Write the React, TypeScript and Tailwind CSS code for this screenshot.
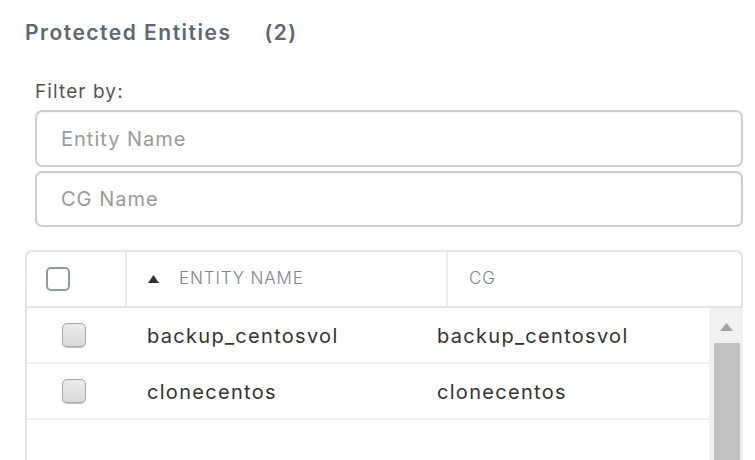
const font = { fontFamily: '"Inter", "Liberation Sans", sans-serif' };

function SortUp() {
  return (
    <svg width="11" height="8" viewBox="0 0 11 8" className="shrink-0">
      <polygon points="5.5,0 11,8 0,8" fill="#333" />
    </svg>
  );
}

function RowCheck() {
  return (
    <div className="w-[24px] h-[24px] rounded-[5px] border border-[#a9a9a9] bg-gradient-to-b from-[#ececec] to-[#d9d9d9] shadow-[0_1px_1px_rgba(0,0,0,0.25)]" />
  );
}

const rows = [
  { name: "backup_centosvol", cg: "backup_centosvol" },
  { name: "clonecentos", cg: "clonecentos" },
];

export default function App() {
  return (
    <div className="w-[755px] h-[460px] overflow-hidden bg-white" style={font}>
      <div className="pt-[21px] pl-[25px] h-[45px] flex items-center gap-[33px] text-[21px] tracking-[1.5px] font-semibold text-[#5d6872] leading-[24px]">
        <span>Protected Entities</span>
        <span>(2)</span>
      </div>

      <div className="mt-[37px] pl-[35px] h-[20px] leading-[20px] text-[19px] tracking-[1.1px] text-[#555]">Filter by:</div>

      <div className="mt-[8px] ml-[35px] w-[708px] flex flex-col gap-[4px]">
        <input
          placeholder="Entity Name"
          className="h-[57px] w-full rounded-[7px] border-2 border-[#cfcfcf] pl-[24px] text-[20px] tracking-[1px] text-[#333] placeholder:text-[#9a9a9a] outline-none shadow-[inset_0_1px_2px_rgba(0,0,0,0.05)]"
          style={font}
        />
        <input
          placeholder="CG Name"
          className="h-[56px] w-full rounded-[7px] border-2 border-[#cfcfcf] pl-[24px] text-[20px] tracking-[1px] text-[#333] placeholder:text-[#9a9a9a] outline-none shadow-[inset_0_1px_2px_rgba(0,0,0,0.05)]"
          style={font}
        />
      </div>

      <div className="mt-[23px] ml-[25px] w-[718px]">
        <div className="h-[58px] flex border-2 border-[#e4e4e4] rounded-t-[7px] text-[17px] tracking-[0.85px] font-light text-[#7b8590] uppercase">
          <div className="w-[100px] flex items-center pl-[19px] border-r-2 border-[#ececec]">
            <div className="w-[24px] h-[24px] rounded-[5px] border-2 border-[#8d9ba7] bg-white" />
          </div>
          <div className="w-[321px] flex items-center gap-[20px] pl-[21px] border-r-2 border-[#ececec]">
            <SortUp />
            <span>Entity Name</span>
          </div>
          <div className="flex-1 flex items-center pl-[21px]">CG</div>
        </div>

        <div className="flex h-[200px]">
          <div className="flex-1 border-l-2 border-[#e4e4e4]">
            {rows.map((r) => (
              <div key={r.name} className="h-[56px] flex items-center border-b-2 border-[#f0f0f0] text-[20px] tracking-[1.3px] text-[#333]">
                <div className="w-[120px] pl-[35px]">
                  <RowCheck />
                </div>
                <div className="w-[290px] pt-[2px]">{r.name}</div>
                <div className="flex-1 pt-[2px]">{r.cg}</div>
              </div>
            ))}
          </div>
          <div className="w-[34px] bg-[#f1f1f1] flex flex-col items-center">
            <svg width="13" height="8" viewBox="0 0 13 8" className="mt-[15px] mb-[12px]">
              <polygon points="6.5,0 13,8 0,8" fill="#a3a3a3" />
            </svg>
            <div className="w-[26px] ml-[2px] flex-1 bg-[#c1c1c1]" />
          </div>
        </div>
      </div>
    </div>
  );
}
